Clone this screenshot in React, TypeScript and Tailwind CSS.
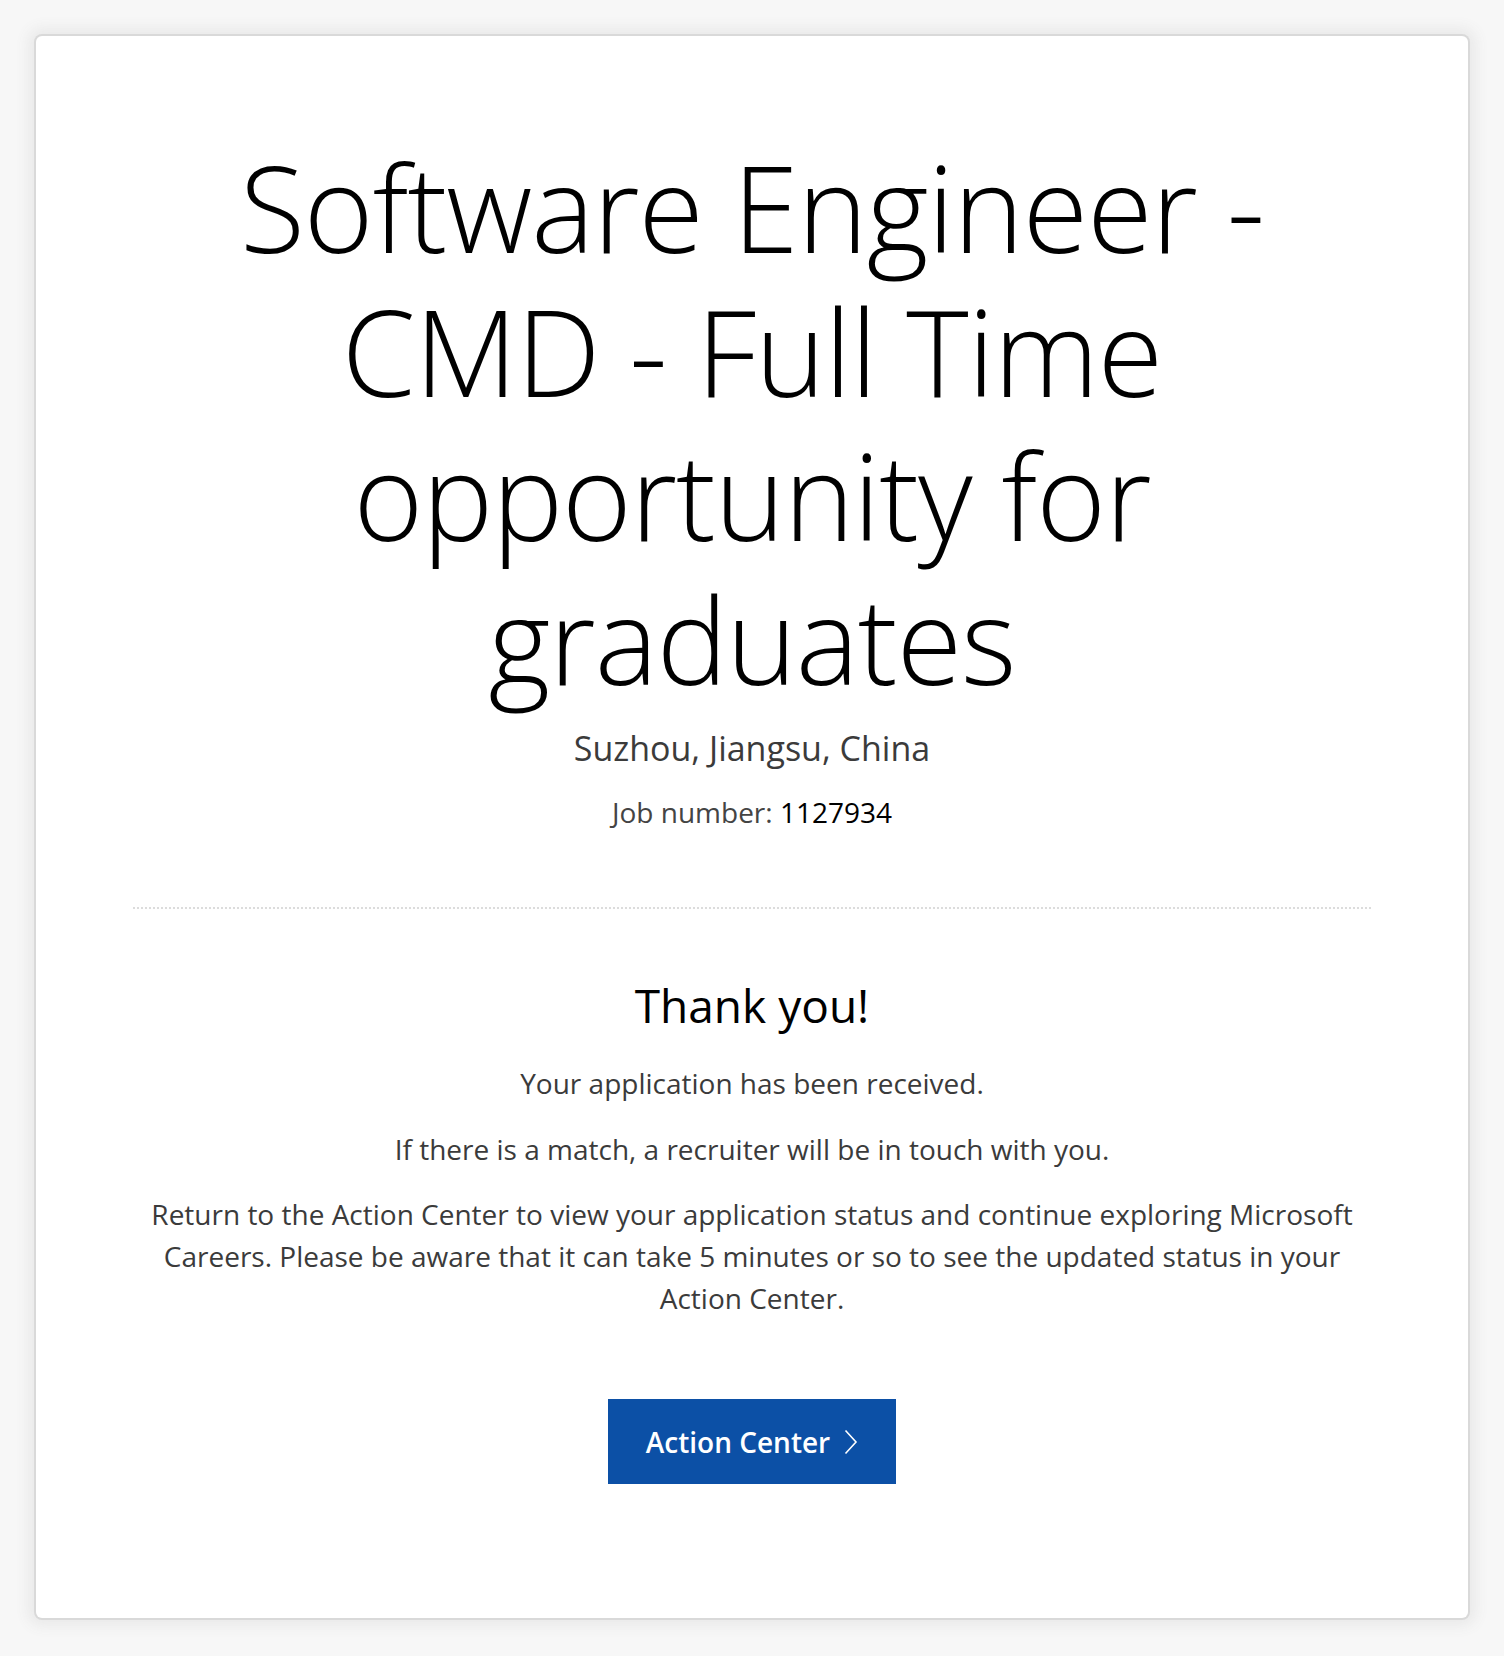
import React from "react";

export default function App() {
  return (
    <div className="min-h-[1656px] w-[1504px] bg-[#f7f7f7] px-[36px] pt-[36px] pb-[38px]" style={{ fontFamily: '"Open Sans", "Noto Sans", sans-serif' }}>
      <div className="flex h-[1582px] flex-col items-center rounded-[6px] bg-white px-[97px] shadow-[0_0_0_2px_#d9d9d9,0_0_14px_8px_#e9e9e9]">
        <h1 className="mt-[99px] w-[1100px] text-center text-[119px] font-light leading-[144px] tracking-[-1px] text-black">
          Software Engineer - CMD - Full Time opportunity for graduates
        </h1>
        <div className="mt-[15px] text-[34px] leading-[44px] text-[#3b3b3b]">Suzhou, Jiangsu, China</div>
        <div className="mt-[24px] text-[28px] leading-[36px] text-[#444]">
          Job number: <span className="text-black">1127934</span>
        </div>
        <div className="mt-[77px] w-full border-t-2 border-dotted border-[#dcdcdc]" />
        <h2 className="mt-[68px] text-[46px] leading-[56px] text-black">Thank you!</h2>
        <p className="mt-[30px] text-[28px] leading-[40px] text-[#3b3b3b]">Your application has been received.</p>
        <p className="mt-[26px] text-[28px] leading-[40px] text-[#3b3b3b]">If there is a match, a recruiter will be in touch with you.</p>
        <p className="mt-[24px] text-center text-[28px] leading-[42px] text-[#3b3b3b]">
          Return to the Action Center to view your application status and continue exploring Microsoft Careers. Please be aware that it can take 5 minutes or so to see the updated status in your Action Center.
        </p>
        <button className="mt-[80px] flex h-[85px] w-[288px] items-center justify-center gap-[14px] bg-[#0c50a6] text-[28px] font-semibold text-white">
          <span>Action Center</span>
          <svg width="14" height="26" viewBox="0 0 14 26" fill="none">
            <path d="M1.5 1.5 L12 13 L1.5 24.5" stroke="white" strokeWidth="1.6" />
          </svg>
        </button>
      </div>
    </div>
  );
}
